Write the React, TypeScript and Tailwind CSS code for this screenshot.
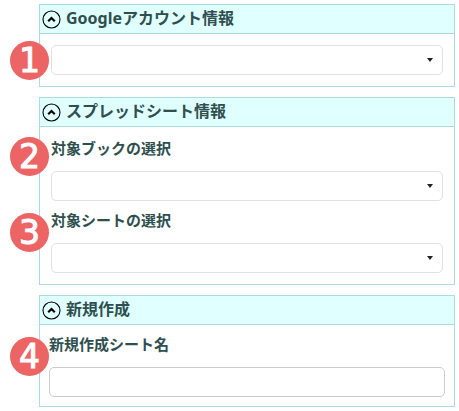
import { useState, type ReactNode } from "react";

interface PanelProps {
  title: string;
  className: string;
  children: ReactNode;
}

interface FieldProps {
  id: string;
  step: number;
  label: string;
  badgeClassName: string;
}

const App = () => {
  return (
    <main className="flex flex-col gap-[10px] bg-white pt-1 pr-1 pb-1 pl-[39px] font-['Noto_Sans','Noto_Sans_CJK_JP',sans-serif] text-[#2f4f4f]">
      <Panel title="Googleアカウント情報" className="px-[11px] py-[11px]">
        <div className="relative">
          <StepBadge step={1} className="top-[-4px] left-[-41px]" />
          <SelectBox id="account" label="Googleアカウント" />
        </div>
      </Panel>

      <Panel
        title="スプレッドシート情報"
        className="flex flex-col gap-[9px] px-[11px] pt-[11px] pb-[11px]"
      >
        <SelectField
          id="book"
          step={2}
          label="対象ブックの選択"
          badgeClassName="top-[-1px] left-[-41px]"
        />
        <SelectField
          id="sheet"
          step={3}
          label="対象シートの選択"
          badgeClassName="top-[3px] left-[-41px]"
        />
      </Panel>

      <Panel title="新規作成" className="px-[9px] pt-[9px] pb-[9px]">
        <div className="relative">
          <StepBadge step={4} className="top-[3px] left-[-39px]" />
          <FieldLabel id="new-sheet" label="新規作成シート名" />
          <input
            id="new-sheet"
            type="text"
            className="block h-[30px] w-full rounded-[5px] border border-[#cccccc] bg-white px-2 text-[15px] outline-none"
          />
        </div>
      </Panel>
    </main>
  );
};

const Panel = ({ title, className, children }: PanelProps) => {
  const [open, setOpen] = useState(true);

  return (
    <section className="border border-[#add8e6]">
      <h2 className="border-b border-[#add8e6] bg-[#e0ffff]">
        <button
          type="button"
          aria-expanded={open}
          onClick={() => setOpen(!open)}
          className="flex h-7 w-full items-center gap-[5px] pb-[2px] pl-[2px] text-left text-base leading-[26px] font-bold"
        >
          <svg
            viewBox="0 0 19 19"
            fill="none"
            stroke="black"
            className={`mt-[2px] size-[19px] shrink-0 ${open ? "" : "rotate-180"}`}
          >
            <circle cx="9.5" cy="9.5" r="8.5" strokeWidth="1.1" />
            <path d="M6.2 11.2 9.5 8 12.8 11.2" strokeWidth="2.2" />
          </svg>
          <span>{title}</span>
        </button>
      </h2>
      {open && <div className={className}>{children}</div>}
    </section>
  );
};

const SelectField = ({ id, step, label, badgeClassName }: FieldProps) => {
  return (
    <div className="relative">
      <StepBadge step={step} className={badgeClassName} />
      <FieldLabel id={id} label={label} />
      <SelectBox id={id} label={label} />
    </div>
  );
};

const FieldLabel = ({ id, label }: { id: string; label: string }) => {
  return (
    <label htmlFor={id} className="mb-[13px] block text-[15px] leading-5 font-bold">
      {label}
    </label>
  );
};

const SelectBox = ({ id, label }: { id: string; label: string }) => {
  return (
    <div className="relative">
      <select
        id={id}
        aria-label={label}
        className="block h-[30px] w-full appearance-none rounded-[5px] border border-[#e2e2e2] bg-white pr-7 pl-2 text-[15px] outline-none"
      >
        <option value="" />
      </select>
      <svg
        viewBox="0 0 6 4"
        className="pointer-events-none absolute top-[13px] right-[10px] h-1 w-[6px]"
      >
        <path d="M0 0H6L3 4Z" fill="#222222" />
      </svg>
    </div>
  );
};

const StepBadge = ({ step, className }: { step: number; className: string }) => {
  return (
    <span
      className={`absolute z-10 flex size-[39px] items-center justify-center rounded-full bg-[#ed6464] font-['DejaVu_Sans',sans-serif] text-[33px] leading-none text-white [-webkit-text-stroke:1px_white] ${className}`}
    >
      {step}
    </span>
  );
};

export default App;
